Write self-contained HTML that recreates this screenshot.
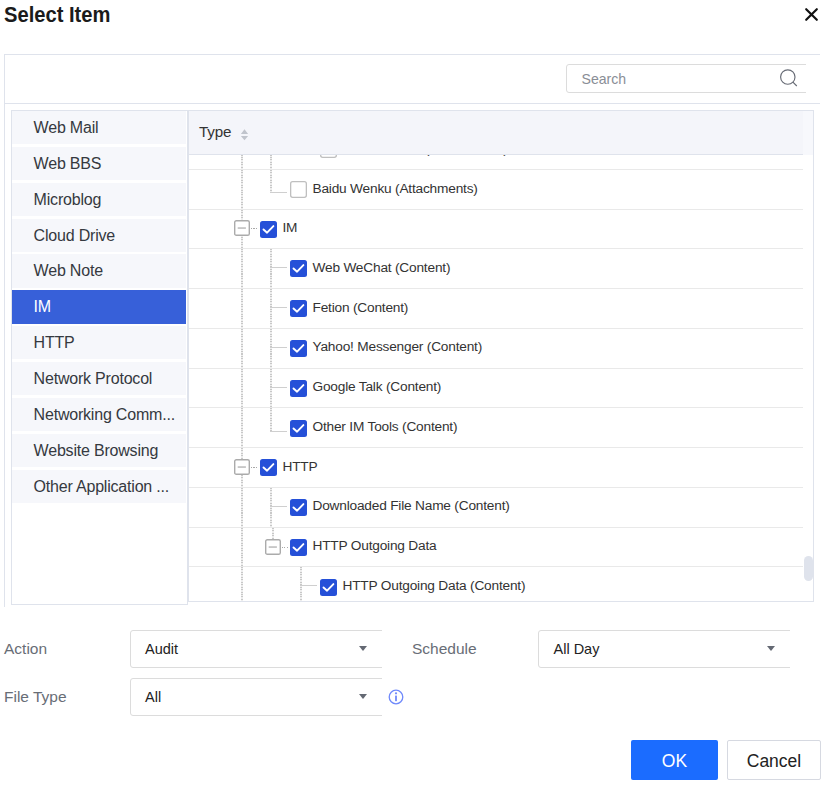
<!DOCTYPE html>
<html><head><meta charset="utf-8">
<style>
*{box-sizing:border-box;margin:0;padding:0}
html,body{width:834px;height:788px;overflow:hidden;background:#fff;font-family:"Liberation Sans",sans-serif;color:#333}
.a{position:absolute}
.title{left:4px;top:3.4px;font-size:21.8px;font-weight:bold;color:#1b1b1b;line-height:24px;white-space:nowrap;transform:scaleX(0.925);transform-origin:0 0}
.panel{left:4px;top:54px;width:816px;height:553px;border-left:1px solid #dfe3ec;border-top:1px solid #dfe3ec;overflow:hidden}
.divider{left:4px;top:103px;width:816px;height:1px;background:#dfe3ec}
.search{left:566px;top:64px;width:260px;height:29px;border:1px solid #dcdcdc;border-radius:3px}
.clipR{left:806px;top:60px;width:28px;height:40px;background:#fff}
.list{left:11px;top:110px;width:177px;height:495px;border:1px solid #dfe3ec;background:#fff}
.li{position:absolute;left:0;width:174px;height:33.4px;background:#f6f7fb;font-size:16px;letter-spacing:-0.2px;line-height:33px;padding-left:21.6px;color:#353940;white-space:nowrap}
.li.sel{background:#3760d9;color:#fff}
.table{left:188px;top:110px;width:626px;height:492px;border:1px solid #dfe3ec;overflow:hidden;background:#fff}
.thead{position:absolute;left:0;top:0;width:614px;height:44px;background:#f4f5fa;border-bottom:1px solid #dfe3ec;z-index:5}
.gutterh{position:absolute;left:614px;top:0;width:12px;height:44px;background:#f7f8fc;z-index:5}
.row{position:absolute}
.rl{position:absolute;background:#e9e9e9}
.txt{position:absolute;font-size:13.7px;letter-spacing:-0.2px;color:#333;white-space:nowrap;line-height:16px}
.cb{position:absolute;width:17px;height:17px;border-radius:2.5px;background:#2550d8}
.cb svg{position:absolute;left:0;top:0}
.cbu{position:absolute;width:17px;height:17px}
.cbu svg{position:absolute;left:0;top:0}
.mb{position:absolute;width:16px;height:16px}
.mb svg{position:absolute;left:0;top:0}
.vd{position:absolute;background:repeating-linear-gradient(to bottom,#c8c8c8 0,#c8c8c8 1px,#eeeeee 1px,#eeeeee 2.45px)}
.hd{position:absolute;background:repeating-linear-gradient(to right,#a8a8a8 0,#a8a8a8 1px,#fff 1px,#fff 2.5px)}
.hs{position:absolute;background:#cfcfcf}
.thumb{left:804px;top:556px;width:9px;height:25px;border-radius:5px;background:#dfe3ec}
.lbl{font-size:15.5px;color:#686d76;white-space:nowrap;line-height:18px}
.sel3{border:1px solid #dcdcdc;border-radius:3px;background:#fff}
.stxt{font-size:14.5px;color:#222;white-space:nowrap;line-height:18px}
.tri{width:0;height:0;border-left:4px solid transparent;border-right:4px solid transparent;border-top:5px solid #646973}
.btn{border-radius:2px;font-size:17.5px;text-align:center;line-height:42px}
</style></head><body>
<div class="a title">Select Item</div>
<svg class="a" style="left:800px;top:3px" width="24" height="24" viewBox="0 0 24 24"><path d="M6.2 6.2L16.8 16.8M16.8 6.2L6.2 16.8" stroke="#111" stroke-width="2.2" stroke-linecap="round"/></svg>

<div class="a panel"></div>
<div class="a divider"></div>
<div class="a search"></div>
<div class="a clipR"></div>
<div class="a" style="left:581.5px;top:70.2px;font-size:14.1px;color:#8a8e96;line-height:18px">Search</div>
<svg class="a" style="left:776px;top:66px" width="24" height="24" viewBox="0 0 24 24"><circle cx="11.8" cy="11" r="7.2" fill="none" stroke="#676b75" stroke-width="1.15"/><path d="M16.9 16.2L20.8 20" stroke="#676b75" stroke-width="1.15"/></svg>

<div class="a list">
  <div class="li" style="top:0.00px">Web Mail</div>
  <div class="li" style="top:35.85px">Web BBS</div>
  <div class="li" style="top:71.70px">Microblog</div>
  <div class="li" style="top:107.55px">Cloud Drive</div>
  <div class="li" style="top:143.40px">Web Note</div>
  <div class="li sel" style="top:179.25px">IM</div>
  <div class="li" style="top:215.10px">HTTP</div>
  <div class="li" style="top:250.95px">Network Protocol</div>
  <div class="li" style="top:286.80px">Networking Comm...</div>
  <div class="li" style="top:322.65px">Website Browsing</div>
  <div class="li" style="top:358.50px">Other Application ...</div>
</div>

<div class="a table" id="tbl">
  <div class="thead"><div class="txt" style="left:10px;top:11.8px;font-size:15.2px;line-height:18px;color:#333">Type</div>
  <svg style="position:absolute;left:51px;top:17px" width="9" height="13" viewBox="0 0 9 13"><path d="M0.9 6L4.5 1.2L8.1 6Z M0.9 8L4.5 12.2L8.1 8Z" fill="#c0c4cc"/></svg>
  </div>
  <div class="gutterh"></div>
  <div id="rows"><div class="vd" style="left:52px;top:19px;width:2px;height:39px"></div>
<div class="vd" style="left:81px;top:19px;width:2px;height:40px"></div>
<div class="vd" style="left:81px;top:19px;width:2px;height:40px"></div>
<div class="cbu" style="left:131px;top:30px"><svg width="17" height="17" viewBox="0 0 17 17"><rect x="0.65" y="0.65" width="15.7" height="15.7" rx="2" fill="#fff" stroke="#bfbfbf" stroke-width="1.3"/></svg></div>
<div class="txt" style="left:153.5px;top:30.14px">Baidu Wenku (Attachments)</div>
<div class="rl" style="left:0px;top:58px;width:614px;height:1px"></div>
<div class="vd" style="left:52px;top:59px;width:2px;height:39px"></div>
<div class="vd" style="left:81px;top:59px;width:2px;height:22px"></div>
<div class="hs" style="left:81px;top:81px;width:17px;height:1px"></div>
<div class="cbu" style="left:101px;top:70px"><svg width="17" height="17" viewBox="0 0 17 17"><rect x="0.65" y="0.65" width="15.7" height="15.7" rx="2" fill="#fff" stroke="#bfbfbf" stroke-width="1.3"/></svg></div>
<div class="txt" style="left:123.5px;top:70.14px">Baidu Wenku (Attachments)</div>
<div class="rl" style="left:0px;top:98px;width:614px;height:1px"></div>
<div class="vd" style="left:52px;top:99px;width:2px;height:38px"></div>
<div class="mb" style="left:45px;top:109px"><svg width="16" height="16" viewBox="0 0 16 16"><rect x="0.7" y="0.7" width="14.6" height="14.6" rx="1.6" fill="#fff" stroke="#ababab" stroke-width="1.4"/><rect x="3.7" y="7.4" width="8.2" height="1.3" fill="#b0b0b0"/></svg></div>
<div class="hd" style="left:62px;top:117px;width:6px;height:1px"></div>
<div class="cb" style="left:71px;top:110px"><svg width="17" height="17" viewBox="0 0 17 17"><path d="M3.5 8.5L7.1 11.7L13.4 5.1" fill="none" stroke="#fff" stroke-width="1.9" stroke-linecap="round" stroke-linejoin="round"/></svg></div>
<div class="txt" style="left:93.5px;top:109.14px">IM</div>
<div class="rl" style="left:0px;top:137px;width:614px;height:1px"></div>
<div class="vd" style="left:52px;top:138px;width:2px;height:39px"></div>
<div class="vd" style="left:81px;top:138px;width:2px;height:40px"></div>
<div class="hs" style="left:81px;top:156px;width:17px;height:1px"></div>
<div class="cb" style="left:101px;top:149px"><svg width="17" height="17" viewBox="0 0 17 17"><path d="M3.5 8.5L7.1 11.7L13.4 5.1" fill="none" stroke="#fff" stroke-width="1.9" stroke-linecap="round" stroke-linejoin="round"/></svg></div>
<div class="txt" style="left:123.5px;top:149.14px">Web WeChat (Content)</div>
<div class="rl" style="left:0px;top:177px;width:614px;height:1px"></div>
<div class="vd" style="left:52px;top:178px;width:2px;height:39px"></div>
<div class="vd" style="left:81px;top:178px;width:2px;height:40px"></div>
<div class="hs" style="left:81px;top:196px;width:17px;height:1px"></div>
<div class="cb" style="left:101px;top:189px"><svg width="17" height="17" viewBox="0 0 17 17"><path d="M3.5 8.5L7.1 11.7L13.4 5.1" fill="none" stroke="#fff" stroke-width="1.9" stroke-linecap="round" stroke-linejoin="round"/></svg></div>
<div class="txt" style="left:123.5px;top:189.14px">Fetion (Content)</div>
<div class="rl" style="left:0px;top:217px;width:614px;height:1px"></div>
<div class="vd" style="left:52px;top:218px;width:2px;height:39px"></div>
<div class="vd" style="left:81px;top:218px;width:2px;height:40px"></div>
<div class="hs" style="left:81px;top:236px;width:17px;height:1px"></div>
<div class="cb" style="left:101px;top:229px"><svg width="17" height="17" viewBox="0 0 17 17"><path d="M3.5 8.5L7.1 11.7L13.4 5.1" fill="none" stroke="#fff" stroke-width="1.9" stroke-linecap="round" stroke-linejoin="round"/></svg></div>
<div class="txt" style="left:123.5px;top:228.14px">Yahoo! Messenger (Content)</div>
<div class="rl" style="left:0px;top:257px;width:614px;height:1px"></div>
<div class="vd" style="left:52px;top:258px;width:2px;height:38px"></div>
<div class="vd" style="left:81px;top:258px;width:2px;height:39px"></div>
<div class="hs" style="left:81px;top:276px;width:17px;height:1px"></div>
<div class="cb" style="left:101px;top:269px"><svg width="17" height="17" viewBox="0 0 17 17"><path d="M3.5 8.5L7.1 11.7L13.4 5.1" fill="none" stroke="#fff" stroke-width="1.9" stroke-linecap="round" stroke-linejoin="round"/></svg></div>
<div class="txt" style="left:123.5px;top:268.14px">Google Talk (Content)</div>
<div class="rl" style="left:0px;top:296px;width:614px;height:1px"></div>
<div class="vd" style="left:52px;top:297px;width:2px;height:39px"></div>
<div class="vd" style="left:81px;top:297px;width:2px;height:23px"></div>
<div class="hs" style="left:81px;top:320px;width:17px;height:1px"></div>
<div class="cb" style="left:101px;top:309px"><svg width="17" height="17" viewBox="0 0 17 17"><path d="M3.5 8.5L7.1 11.7L13.4 5.1" fill="none" stroke="#fff" stroke-width="1.9" stroke-linecap="round" stroke-linejoin="round"/></svg></div>
<div class="txt" style="left:123.5px;top:308.14px">Other IM Tools (Content)</div>
<div class="rl" style="left:0px;top:336px;width:614px;height:1px"></div>
<div class="vd" style="left:52px;top:337px;width:2px;height:39px"></div>
<div class="mb" style="left:45px;top:348px"><svg width="16" height="16" viewBox="0 0 16 16"><rect x="0.7" y="0.7" width="14.6" height="14.6" rx="1.6" fill="#fff" stroke="#ababab" stroke-width="1.4"/><rect x="3.7" y="7.4" width="8.2" height="1.3" fill="#b0b0b0"/></svg></div>
<div class="hd" style="left:62px;top:356px;width:6px;height:1px"></div>
<div class="cb" style="left:71px;top:348px"><svg width="17" height="17" viewBox="0 0 17 17"><path d="M3.5 8.5L7.1 11.7L13.4 5.1" fill="none" stroke="#fff" stroke-width="1.9" stroke-linecap="round" stroke-linejoin="round"/></svg></div>
<div class="txt" style="left:93.5px;top:348.14px">HTTP</div>
<div class="rl" style="left:0px;top:376px;width:614px;height:1px"></div>
<div class="vd" style="left:52px;top:377px;width:2px;height:39px"></div>
<div class="vd" style="left:81px;top:377px;width:2px;height:40px"></div>
<div class="hs" style="left:81px;top:395px;width:17px;height:1px"></div>
<div class="cb" style="left:101px;top:388px"><svg width="17" height="17" viewBox="0 0 17 17"><path d="M3.5 8.5L7.1 11.7L13.4 5.1" fill="none" stroke="#fff" stroke-width="1.9" stroke-linecap="round" stroke-linejoin="round"/></svg></div>
<div class="txt" style="left:123.5px;top:387.14px">Downloaded File Name (Content)</div>
<div class="rl" style="left:0px;top:416px;width:614px;height:1px"></div>
<div class="vd" style="left:52px;top:417px;width:2px;height:38px"></div>
<div class="vd" style="left:83px;top:417px;width:2px;height:11px"></div>
<div class="mb" style="left:76px;top:428px"><svg width="16" height="16" viewBox="0 0 16 16"><rect x="0.7" y="0.7" width="14.6" height="14.6" rx="1.6" fill="#fff" stroke="#ababab" stroke-width="1.4"/><rect x="3.7" y="7.4" width="8.2" height="1.3" fill="#b0b0b0"/></svg></div>
<div class="hd" style="left:93px;top:436px;width:6px;height:1px"></div>
<div class="cb" style="left:101px;top:428px"><svg width="17" height="17" viewBox="0 0 17 17"><path d="M3.5 8.5L7.1 11.7L13.4 5.1" fill="none" stroke="#fff" stroke-width="1.9" stroke-linecap="round" stroke-linejoin="round"/></svg></div>
<div class="txt" style="left:123.5px;top:427.14px">HTTP Outgoing Data</div>
<div class="rl" style="left:0px;top:455px;width:614px;height:1px"></div>
<div class="vd" style="left:52px;top:456px;width:2px;height:40px"></div>
<div class="vd" style="left:111px;top:456px;width:2px;height:40px"></div>
<div class="hs" style="left:111px;top:474px;width:17px;height:1px"></div>
<div class="cb" style="left:131px;top:468px"><svg width="17" height="17" viewBox="0 0 17 17"><path d="M3.5 8.5L7.1 11.7L13.4 5.1" fill="none" stroke="#fff" stroke-width="1.9" stroke-linecap="round" stroke-linejoin="round"/></svg></div>
<div class="txt" style="left:153.5px;top:467.14px">HTTP Outgoing Data (Content)</div></div>
</div>
<div class="a thumb"></div>

<div class="a lbl" style="left:4px;top:640px">Action</div>
<div class="a sel3" style="left:130px;top:630px;width:260px;height:38px"></div>
<div class="a lbl" style="left:412px;top:640px">Schedule</div>
<div class="a sel3" style="left:538px;top:630px;width:260px;height:38px"></div>
<div class="a lbl" style="left:4px;top:688px">File Type</div>
<div class="a sel3" style="left:130px;top:678px;width:260px;height:38px"></div>
<div class="a" style="left:382px;top:620px;width:30px;height:100px;background:#fff"></div>
<div class="a" style="left:790px;top:620px;width:44px;height:60px;background:#fff"></div>
<div class="a stxt" style="left:145px;top:640px">Audit</div>
<div class="a stxt" style="left:553.5px;top:640px">All Day</div>
<div class="a stxt" style="left:145px;top:688px">All</div>
<div class="a tri" style="left:359px;top:646px"></div>
<div class="a tri" style="left:767px;top:646px"></div>
<div class="a tri" style="left:359px;top:694px"></div>
<svg class="a" style="left:387px;top:688px" width="18" height="18" viewBox="0 0 18 18"><circle cx="9" cy="9" r="6.8" fill="none" stroke="#6f89fb" stroke-width="1.3"/><circle cx="9" cy="5.3" r="1.1" fill="#6f89fb"/><rect x="8.1" y="7.6" width="1.8" height="5.6" rx="0.4" fill="#6f89fb"/></svg>

<div class="a btn" style="left:631px;top:740px;width:87px;height:40px;background:#1b6cff;color:#fff">OK</div>
<div class="a btn" style="left:727px;top:740px;width:94px;height:40px;border:1px solid #d6d9e1;color:#222;line-height:41px">Cancel</div>
</body></html>
